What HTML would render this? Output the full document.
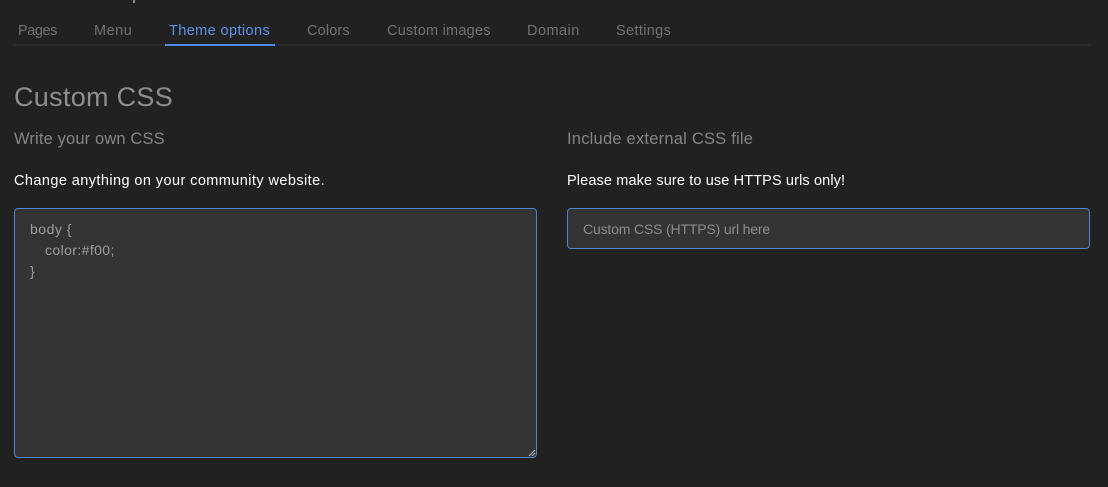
<!DOCTYPE html>
<html>
<head>
<meta charset="utf-8">
<style>
html,body{margin:0;padding:0;width:1108px;height:487px;overflow:hidden;background:#212121;font-family:"Liberation Sans",sans-serif;}
.t{position:absolute;white-space:nowrap;line-height:20px;}
.n{top:21px;font-size:14.5px;color:#727272;}
.box{position:absolute;box-sizing:border-box;background:#333;border:1px solid #5484cc;border-radius:4px;}
</style>
</head>
<body>
<div style="position:absolute;left:133px;top:0;width:2px;height:3px;background:#8a8a8a"></div>
<div class="t n" style="left:18px;letter-spacing:-.45px">Pages</div>
<div class="t n" style="left:94px;letter-spacing:.5px">Menu</div>
<div class="t n" style="left:169px;color:#5c93e6;letter-spacing:.4px">Theme options</div>
<div class="t n" style="left:307px;letter-spacing:.15px">Colors</div>
<div class="t n" style="left:387px;letter-spacing:.23px">Custom images</div>
<div class="t n" style="left:527px;letter-spacing:.47px">Domain</div>
<div class="t n" style="left:616px;letter-spacing:.35px">Settings</div>
<div style="position:absolute;left:14px;top:44px;width:1076px;height:2px;background:#2a2a2a"></div>
<div style="position:absolute;left:165px;top:44px;width:110px;height:2px;background:#4f8be6"></div>
<div class="t" style="left:14px;top:80px;font-size:27px;line-height:34px;color:#8e8e8e;letter-spacing:.3px">Custom CSS</div>
<div class="t" style="left:14px;top:129px;font-size:16.5px;color:#858585;letter-spacing:.14px">Write your own CSS</div>
<div class="t" style="left:567px;top:129px;font-size:16.5px;color:#858585;letter-spacing:.22px">Include external CSS file</div>
<div class="t" style="left:14px;top:171px;font-size:14.5px;color:#fff;letter-spacing:.42px">Change anything on your community website.</div>
<div class="t" style="left:567px;top:171px;font-size:14.5px;color:#fff;letter-spacing:.125px">Please make sure to use HTTPS urls only!</div>
<div class="box" style="left:14px;top:208px;width:523px;height:250px"></div>
<div class="t" style="left:30px;top:219px;font-size:14px;color:#9e9e9e;letter-spacing:.5px">body {</div>
<div class="t" style="left:45px;top:240px;font-size:14px;color:#9e9e9e;letter-spacing:.4px">color:#f00;</div>
<div class="t" style="left:30px;top:261px;font-size:14px;color:#9e9e9e">}</div>
<svg style="position:absolute;left:528px;top:449px" width="9" height="9"><path d="M1 7L7 1M4 7L7 4" stroke="#bbb" stroke-width="1" fill="none"/></svg>
<div class="box" style="left:567px;top:208px;width:523px;height:41px"></div>
<div class="t" style="left:583px;top:219px;font-size:14px;color:#8c8c8c;letter-spacing:-.16px">Custom CSS (HTTPS) url here</div>
</body>
</html>
